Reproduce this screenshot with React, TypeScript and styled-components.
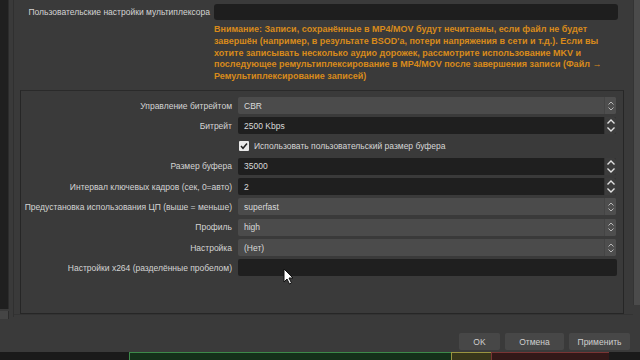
import React from "react";
import styled, { createGlobalStyle } from "styled-components";

const GlobalStyle = createGlobalStyle`
  html, body {
    margin: 0;
    padding: 0;
    background: #1b1b1b;
  }
  * {
    box-sizing: border-box;
  }
`;

const Screen = styled.div`
  position: relative;
  width: 640px;
  height: 360px;
  overflow: hidden;
  display: flex;
  flex-direction: column;
  background: #3a3a3a;
  font-family: "Liberation Sans", Arial, sans-serif;
  font-size: 8.5px;
  color: #d6d6d6;
`;

const Body = styled.div`
  display: flex;
  height: 327px;
  flex-shrink: 0;
`;

const Sidebar = styled.div`
  width: 9px;
  display: flex;
  flex-direction: column;
  gap: 2px;
  padding-bottom: 8px;
`;

const SidebarList = styled.div`
  flex: 1;
  background: #1f1f1f;
  border-right: 1px solid #2c2c2c;
`;

const SidebarFoot = styled.div`
  height: 8px;
  background: #454545;
  border-right: 1px solid #2c2c2c;
`;

const Divider = styled.div`
  width: 5px;
  border-right: 1px solid #303030;
  margin-bottom: 10px;
`;

const ScrollArea = styled.div`
  flex: 1;
  display: flex;
  flex-direction: column;
  padding: 4px 15px 0 0;
  border-bottom: 1px solid #333333;
  margin-bottom: 12px;
  & > * {
    flex-shrink: 0;
  }
`;

const Scrollbar = styled.div`
  width: 7px;
  background: #4b4b4b;
  margin-bottom: 22px;
  border-left: 1px solid #343434;
`;

const TopRow = styled.div`
  display: grid;
  grid-template-columns: 196px 1fr;
  column-gap: 4px;
  align-items: center;
  height: 16px;
`;

const Label = styled.div`
  text-align: right;
  white-space: nowrap;
  color: #d4d4d4;
`;

const TextInput = styled.div`
  height: 16px;
  background: #1e1e1e;
  border-radius: 3px;
`;

const Warning = styled.div`
  margin: 4px 0 0 200px;
  height: 59px;
  color: #d88a1a;
  font-weight: bold;
  font-size: 9px;
  line-height: 11.8px;
  white-space: nowrap;
`;

const Group = styled.div`
  margin: 7px -6px 0 6px;
  height: 224px;
  border: 1px solid #262626;
  border-top-color: #2a2a2a;
  padding: 6px 7px 0 0;
  display: grid;
  grid-template-columns: 211px 1fr;
  grid-auto-rows: 17px;
  column-gap: 6px;
  row-gap: 3.3px;
  align-content: start;
  align-items: center;
`;

const Field = styled.div<{ $kind: "combo" | "spin" | "text" }>`
  height: 17px;
  display: flex;
  align-items: center;
  border-radius: 2px;
  overflow: hidden;
  background: ${({ $kind }) => ($kind === "combo" ? "#4b4b4b" : "#1f1f1f")};
  margin-right: ${({ $kind }) => ($kind === "text" ? "-1px" : "0")};
`;

const FieldValue = styled.div`
  flex: 1;
  padding: 0 6px;
  color: #dadada;
  white-space: nowrap;
`;

const Arrows = styled.div<{ $kind: "combo" | "spin" }>`
  width: 12px;
  height: 100%;
  display: flex;
  align-items: center;
  justify-content: center;
  background: ${({ $kind }) => ($kind === "combo" ? "#4e4e4e" : "#3c3c3c")};
  border-left: 1px solid ${({ $kind }) => ($kind === "combo" ? "#444444" : "#333333")};
`;

const CheckRow = styled.div`
  grid-column: 2;
  display: flex;
  align-items: center;
  gap: 5px;
  padding-left: 1px;
`;

const CheckBox = styled.div`
  width: 10px;
  height: 10px;
  background: #e8e8e8;
  border-radius: 1px;
  display: flex;
  align-items: center;
  justify-content: center;
`;

const Footer = styled.div`
  height: 25px;
  flex-shrink: 0;
  display: flex;
  justify-content: flex-end;
  align-items: flex-start;
  gap: 5px;
  padding: 6px 10px 0 0;
`;

const Button = styled.div<{ $w: number }>`
  width: ${({ $w }) => $w}px;
  height: 17px;
  background: #474747;
  border-radius: 2px;
  display: flex;
  align-items: center;
  justify-content: center;
  color: #cfcfcf;
`;

const Meter = styled.div`
  height: 8px;
  flex-shrink: 0;
  display: flex;
  background: #1a1a1a;
  padding-left: 129px;
  padding-right: 30px;
`;

const MeterSeg = styled.div<{ $w: number; $bg: string; $line: string }>`
  width: ${({ $w }) => $w}px;
  background: ${({ $bg }) => $bg};
  border-top: 1px solid ${({ $line }) => $line};
  border-left: 1px solid ${({ $line }) => $line};
`;

const Cursor = styled.svg`
  position: absolute;
  left: 283px;
  top: 268px;
`;

const ComboArrows = () => (
  <svg width="8" height="12" viewBox="0 0 8 12">
    <path d="M1.5 4.5 L4 2 L6.5 4.5 M1.5 7.5 L4 10 L6.5 7.5" fill="none" stroke="#b8b8b8" strokeWidth="1" />
  </svg>
);

const SpinArrows = () => (
  <svg width="10" height="15" viewBox="0 0 10 15">
    <path d="M1.5 5.5 L5 2 L8.5 5.5 M1.5 9.5 L5 13 L8.5 9.5" fill="none" stroke="#e0e0e0" strokeWidth="1.4" />
  </svg>
);

type Row =
  | { label: string; kind: "combo" | "spin" | "text"; value: string }
  | { check: string };

const rows: Row[] = [
  { label: "Управление битрейтом", kind: "combo", value: "CBR" },
  { label: "Битрейт", kind: "spin", value: "2500 Kbps" },
  { check: "Использовать пользовательский размер буфера" },
  { label: "Размер буфера", kind: "spin", value: "35000" },
  { label: "Интервал ключевых кадров (сек, 0=авто)", kind: "spin", value: "2" },
  { label: "Предустановка использования ЦП (выше = меньше)", kind: "combo", value: "superfast" },
  { label: "Профиль", kind: "combo", value: "high" },
  { label: "Настройка", kind: "combo", value: "(Нет)" },
  { label: "Настройки x264 (разделённые пробелом)", kind: "text", value: "" },
];

export default function App() {
  return (
    <Screen>
      <GlobalStyle />
      <Body>
        <Sidebar>
          <SidebarList />
          <SidebarFoot />
        </Sidebar>
        <Divider />
        <ScrollArea>
          <TopRow>
            <Label>Пользовательские настройки мультиплексора</Label>
            <TextInput />
          </TopRow>
          <Warning>
            Внимание: Записи, сохранённые в MP4/MOV будут нечитаемы, если файл не будет
            <br />
            завершён (например, в результате BSOD'а, потери напряжения в сети и т.д.). Если вы
            <br />
            хотите записывать несколько аудио дорожек, рассмотрите использование MKV и
            <br />
            последующее ремультиплексирование в MP4/MOV после завершения записи (Файл →
            <br />
            Ремультиплексирование записей)
          </Warning>
          <Group>
            {rows.map((r, i) =>
              "check" in r ? (
                <CheckRow key={i}>
                  <CheckBox>
                    <svg width="8" height="8" viewBox="0 0 8 8">
                      <path d="M1 4 L3 6.3 L7 1.5" fill="none" stroke="#202020" strokeWidth="1.5" />
                    </svg>
                  </CheckBox>
                  {r.check}
                </CheckRow>
              ) : (
                <React.Fragment key={i}>
                  <Label>{r.label}</Label>
                  <Field $kind={r.kind}>
                    <FieldValue>{r.value}</FieldValue>
                    {r.kind === "combo" && (
                      <Arrows $kind="combo">
                        <ComboArrows />
                      </Arrows>
                    )}
                    {r.kind === "spin" && (
                      <Arrows $kind="spin">
                        <SpinArrows />
                      </Arrows>
                    )}
                  </Field>
                </React.Fragment>
              )
            )}
          </Group>
        </ScrollArea>
        <Scrollbar />
      </Body>
      <Footer>
        <Button $w={41}>OK</Button>
        <Button $w={59}>Отмена</Button>
        <Button $w={61}>Применить</Button>
      </Footer>
      <Meter>
        <MeterSeg $w={322} $bg="#14301a" $line="#3c8a4a" />
        <MeterSeg $w={40} $bg="#38361a" $line="#9a9440" />
        <MeterSeg $w={118} $bg="#331818" $line="#7a3434" />
      </Meter>
      <Cursor width="11" height="17" viewBox="0 0 11 17">
        <path d="M1 1 L1 14 L4 11 L6.5 16 L8.5 15 L6 10 L10 10 Z" fill="#ffffff" stroke="#111111" strokeWidth="1" />
      </Cursor>
    </Screen>
  );
}
